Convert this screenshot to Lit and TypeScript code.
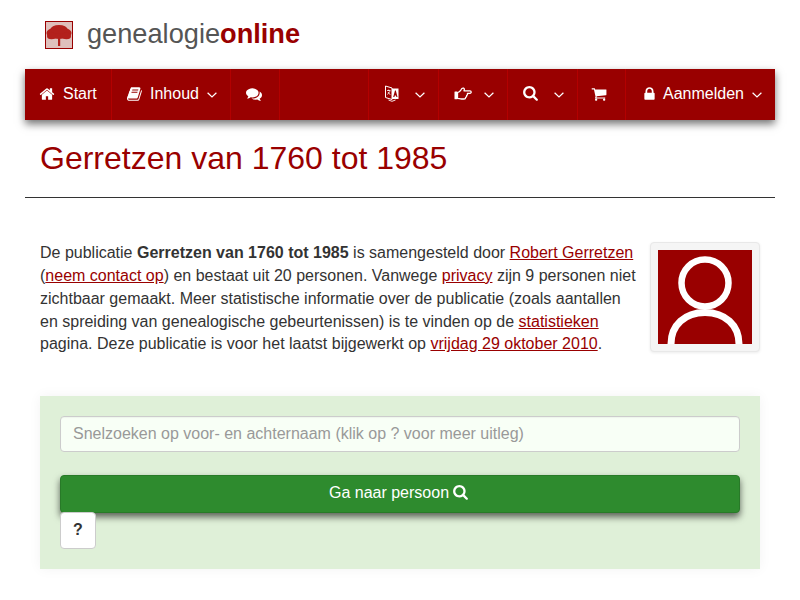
import { LitElement, html, css, svg } from "lit";
import { customElement } from "lit/decorators.js";

const P = {
  home: ["0 0 1792 1792", "M1472 992v480q0 26-19 45t-45 19h-384v-384h-256v384h-384q-26 0-45-19t-19-45v-480q0-1 .5-3t.5-3l575-474 575 474q1 2 1 6zm223-69l-62 74q-8 9-21 11h-3q-13 0-21-7l-692-577-692 577q-12 8-24 7-13-2-21-11l-62-74q-8-10-7-23.5t11-21.5l719-599q32-26 76-26t76 26l244 204v-195q0-14 9-23t23-9h192q14 0 23 9t9 23v408l219 182q10 8 11 21.5t-7 23.5z"],
  book: ["0 0 1792 1792", "M1639 478q40 57 18 129l-275 906q-19 64-76.5 107.5t-122.5 43.5h-923q-77 0-148.5-53.5t-99.5-131.5q-24-67-2-127 0-4 3-27t4-37q1-8-3-21.5t-3-19.5q2-11 8-21t16.5-23.5 16.5-23.5q23-38 45-91.5t30-91.5q3-10 .5-30t-.5-28q3-11 17-28t17-23q21-36 42-92t25-90q1-9-2.5-32t.5-28q4-13 22-30.5t22-22.5q19-26 42.5-84.5t27.5-96.5q1-8-3-25.5t-2-26.5q2-8 9-18t18-23 17-21q8-12 16.5-30.5t15-35 16-36 19.5-32 26.5-23.5 36-11.5 47.5 5.5l-1 3q38-9 51-9h761q74 0 114 56t18 130l-274 906q-36 119-71.5 153.5t-128.5 34.5h-869q-27 0-38 15-11 16-1 43 24 70 144 70h923q29 0 56-15.5t35-41.5l300-987q7-22 5-57 38 15 59 43zm-1064 2q-4 13 2 22.5t20 9.5h608q13 0 25.5-9.5t16.5-22.5l21-64q4-13-2-22.5t-20-9.5h-608q-13 0-25.5 9.5t-16.5 22.5zm-83 256q-4 13 2 22.5t20 9.5h608q13 0 25.5-9.5t16.5-22.5l21-64q4-13-2-22.5t-20-9.5h-608q-13 0-25.5 9.5t-16.5 22.5z"],
  comments: ["0 0 1792 1792", "M1408 768q0 139-94 257t-256.5 186.5-353.5 68.5q-86 0-176-16-124 88-278 128-36 9-86 16h-3q-11 0-20.5-8t-11.5-21q-1-3-1-6.5t.5-6.5 2-6l2.5-5 3.5-5.5 4-5 4.5-5 4-4.5q5-6 23-25t26-29.5 22.5-29 25-38.5 20.5-44q-124-72-195-177t-71-224q0-139 94-257t256.5-186.5 353.5-68.5 353.5 68.5 256.5 186.5 94 257zm384 256q0 120-71 224.5t-195 176.5q10 24 20.5 44t25 38.5 22.5 29 26 29.5 23 25q1 1 4 4.5t4.5 5 4 5 3.5 5.5l2.5 5 2 6 .5 6.5-1 6.5q-3 14-13 22t-22 7q-50-7-86-16-154-40-278-128-90 16-176 16-271 0-472-132 58 4 88 4 161 0 309-45t264-129q125-92 192-212t67-254q0-77-23-152 129 71 204 178t75 230z"],
  search: ["0 0 1664 1792", "M1152 704q0-185-131.5-316.5t-316.5-131.5-316.5 131.5-131.5 316.5 131.5 316.5 316.5 131.5 316.5-131.5 131.5-316.5zm512 832q0 52-38 90t-90 38q-54 0-90-38l-343-342q-179 124-399 124-143 0-273.5-55.5t-225-150-150-225-55.5-273.5 55.5-273.5 150-225 225-150 273.5-55.5 273.5 55.5 225 150 150 225 55.5 273.5q0 220-124 399l343 343q37 37 37 90z"],
  cart: ["0 0 1792 1792", "M704 1536q0 52-38 90t-90 38-90-38-38-90 38-90 90-38 90 38 38 90zm896 0q0 52-38 90t-90 38-90-38-38-90 38-90 90-38 90 38 38 90zm128-1088v512q0 24-16.5 42.5t-40.5 21.5l-1044 122q13 60 13 70 0 16-24 64h920q26 0 45 19t19 45-19 45-45 19h-1024q-26 0-45-19t-19-45q0-11 8-31.5t16-36 21.5-40 15.5-29.5l-177-823h-204q-26 0-45-19t-19-45 19-45 45-19h256q16 0 28.5 6.5t19.5 15.5 13 24.5 8 26 5.5 29.5 4.5 26h1201q26 0 45 19t19 45z"],
  lock: ["0 0 1152 1792", "M320 768h512v-192q0-106-75-181t-181-75-181 75-75 181v192zm832 96v576q0 40-28 68t-68 28h-960q-40 0-68-28t-28-68v-576q0-40 28-68t68-28h32v-192q0-184 132-316t316-132 316 132 132 316v192h32q40 0 68 28t28 68z"],
} as const;

const icon = (n: keyof typeof P, cls: string) => html`<svg class=${cls} viewBox=${P[n][0]} aria-hidden="true"><path fill="currentColor" d=${P[n][1]}></path></svg>`;

const chev = html`<svg class="chev" viewBox="0 0 10 6" aria-hidden="true"><polyline points="0.6,0.7 5,5 9.4,0.7" fill="none" stroke="currentColor" stroke-width="1.2"></polyline></svg>`;

const lang = html`<svg class="i-lang" viewBox="0 0 14 18" aria-hidden="true">
  <path d="M0.5 1 L7 3 V14.5 L0.5 12.5 Z" fill="none" stroke="#fff" stroke-width="1"></path>
  <path d="M7 3.5 H13.5 V14 H7 Z" fill="#fff"></path>
  <path d="M10 5.5 L8.2 12 H9.4 L9.8 10.6 H11 L11.4 12 H12.5 L10.8 5.5 Z" fill="#900"></path>
  <path d="M2 5.5 H5.5 M3.7 4.6 V6 M2.5 9.5 L5 6.2 M3 7 L5.2 9.8" fill="none" stroke="#fff" stroke-width=".8"></path>
  <path d="M3.5 15 Q7 17.6 10.5 15" fill="none" stroke="#fff" stroke-width=".9"></path>
</svg>`;

const hand = html`<svg class="i-hand" viewBox="0 0 18 13" aria-hidden="true">
  <rect x="0.5" y="4.6" width="3" height="7.6" rx=".5" fill="#fff"></rect>
  <path d="M3.5 5.6 C5 5.4 6 4.4 7 2.8 C7.6 1.6 8.4 0.8 9.6 1.2 C10.6 1.6 10.4 2.8 10 3.8 H16 C17.6 3.8 17.6 6.3 16 6.3 H13.4 C13.8 7.4 13.2 8.2 12.6 8.4 C12.8 9.4 12.2 10.2 11.6 10.4 C11.6 11.6 10.8 12 10 12 H7.6 C6 12 5 11.4 3.5 11.3 Z" fill="none" stroke="#fff" stroke-width="1.3" stroke-linejoin="round"></path>
</svg>`;

const tree = svg`<rect width="26" height="26" fill="#dfc0bc"></rect>
  <g class="crown" fill="#b3211c"><ellipse cx="13" cy="11" rx="12.5" ry="6"></ellipse><ellipse cx="13" cy="7.5" rx="8.5" ry="4.5"></ellipse><ellipse cx="5.5" cy="14" rx="4.5" ry="3.2"></ellipse><ellipse cx="20.5" cy="14" rx="4.5" ry="3.2"></ellipse><rect x="12" y="12" width="2.2" height="12"></rect></g>`;

@customElement("app-root")
export class AppRoot extends LitElement {
  static styles = css`
    :host { display: block; font-family: "Liberation Sans", Arial, sans-serif; font-size: 16px; line-height: 22.857px; color: #333; background: #fff; }
    .page { padding: 0 25px; height: 600px; box-sizing: border-box; overflow: hidden; }
    .brand { height: 69px; display: flex; align-items: center; padding-left: 20px; gap: 14px; }
    .logo { width: 26px; height: 26px; border: 1px solid #990000; display: block; }
    .crown { filter: blur(.5px); }
    .name { font-size: 27.2px; line-height: 36px; color: #555; margin-top: -2px; }
    .name b { color: #990000; }
    nav { display: grid; grid-template-columns: 86px 119px 49px 89px 70px 69px 70px 48px 150px; height: 51px; background: #990000; color: #fff; box-shadow: 0 4px 8px rgba(0, 0, 0, .55); }
    .item { display: flex; align-items: center; padding-bottom: 2px; box-sizing: border-box; border-left: 1px solid #b30000; padding-left: 15px; }
    .item:first-child { border-left: 0; }
    .t { white-space: nowrap; position: relative; top: 1px; }
    .chev { width: 10px; height: 6px; margin-left: auto; margin-right: 13px; margin-top: 2px; }
    .i-home { width: 16px; height: 16px; margin-right: 8px; margin-left: -1px; }
    .i-book { width: 16px; height: 16px; margin-right: 7px; }
    .i-com { width: 16px; height: 16px; }
    .i-lang { width: 14px; height: 18px; margin-left: 1px; }
    .i-hand { width: 18px; height: 13px; }
    .i-search { width: 15px; height: 16px; }
    .i-cart { width: 16px; height: 16px; margin-left: -2px; }
    .i-lock { width: 11px; height: 16px; margin: 0 8px 0 3px; }
    h1 { margin: 0; padding: 20px 15px 0; height: 57px; font-size: 32px; line-height: 36px; font-weight: 400; color: #990000; border-bottom: 1px solid #333; box-sizing: content-box; }
    .intro { padding: 44px 15px 0; display: flow-root; }
    .photo { float: right; width: 110px; height: 110px; box-sizing: border-box; padding: 7px; margin: 0 0 0 10px; background: #f5f5f5; border: 1px solid #e8e8e8; border-radius: 4px; box-shadow: 0 1px 3px rgba(0, 0, 0, .08); }
    .photo svg { display: block; width: 94px; height: 94px; }
    p { margin: 0; }
    a { color: #990000; text-decoration: underline; }
    .panel { margin: 40px 15px 0; padding: 20px; height: 173px; box-sizing: border-box; background: #dff0d8; box-shadow: 0 0 12px rgba(0, 0, 0, .05); }
    input { display: block; width: 100%; height: 36px; box-sizing: border-box; padding: 6px 12px; font: inherit; line-height: 22px; border: 1px solid #ccc; border-radius: 4px; background: #f8fff6; color: #333; outline: 0; box-shadow: inset 0 1px 1px rgba(0, 0, 0, .04); }
    input::placeholder { color: #999; opacity: 1; }
    .go { display: flex; align-items: center; justify-content: center; gap: 4px; width: 100%; height: 38px; margin-top: 23px; padding: 0 3px 2px 0; font: inherit; color: #fff; background: #2e8b2e; border: 1px solid #287a28; border-radius: 4px; box-shadow: 0 4px 7px rgba(0, 0, 0, .6); }
    .go svg { width: 15px; height: 16px; }
    .help { display: block; width: 36px; height: 37px; margin-top: -1px; padding: 0; font: inherit; font-weight: 700; color: #333; background: #fff; border: 1px solid #ccc; border-radius: 4px; position: relative; }
  `;

  render() {
    return html`<div class="page">
      <header class="brand">
        <svg class="logo" viewBox="0 0 26 26" aria-hidden="true">${tree}</svg>
        <div class="name">genealogie<b>online</b></div>
      </header>
      <nav>
        <div class="item">${icon("home", "i-home")}<span class="t">Start</span></div>
        <div class="item">${icon("book", "i-book")}<span class="t">Inhoud</span>${chev}</div>
        <div class="item">${icon("comments", "i-com")}</div>
        <div class="item"></div>
        <div class="item">${lang}${chev}</div>
        <div class="item">${hand}${chev}</div>
        <div class="item">${icon("search", "i-search")}${chev}</div>
        <div class="item">${icon("cart", "i-cart")}</div>
        <div class="item">${icon("lock", "i-lock")}<span class="t">Aanmelden</span>${chev}</div>
      </nav>
      <h1>Gerretzen van 1760 tot 1985</h1>
      <section class="intro">
        <div class="photo">
          <svg viewBox="0 0 94 94" aria-hidden="true">
            <rect width="94" height="94" fill="#990000"></rect>
            <circle cx="47" cy="33" r="23.5" fill="none" stroke="#fff" stroke-width="6.5"></circle>
            <path d="M13 94 C13 75 27 62.5 47 62.5 C67 62.5 81 75 81 94" fill="none" stroke="#fff" stroke-width="7"></path>
          </svg>
        </div>
        <p>De publicatie <b>Gerretzen van 1760 tot 1985</b> is samengesteld door <a href="#">Robert Gerretzen</a> (<a href="#">neem contact op</a>) en bestaat uit 20 personen. Vanwege <a href="#">privacy</a> zijn 9 personen niet zichtbaar gemaakt. Meer statistische informatie over de publicatie (zoals aantallen en spreiding van genealogische gebeurtenissen) is te vinden op de <a href="#">statistieken</a> pagina. Deze publicatie is voor het laatst bijgewerkt op <a href="#">vrijdag 29 oktober 2010</a>.</p>
      </section>
      <section class="panel">
        <input placeholder="Snelzoeken op voor- en achternaam (klik op ? voor meer uitleg)" />
        <button class="go">Ga naar persoon ${icon("search", "")}</button>
        <button class="help">?</button>
      </section>
    </div>`;
  }
}
